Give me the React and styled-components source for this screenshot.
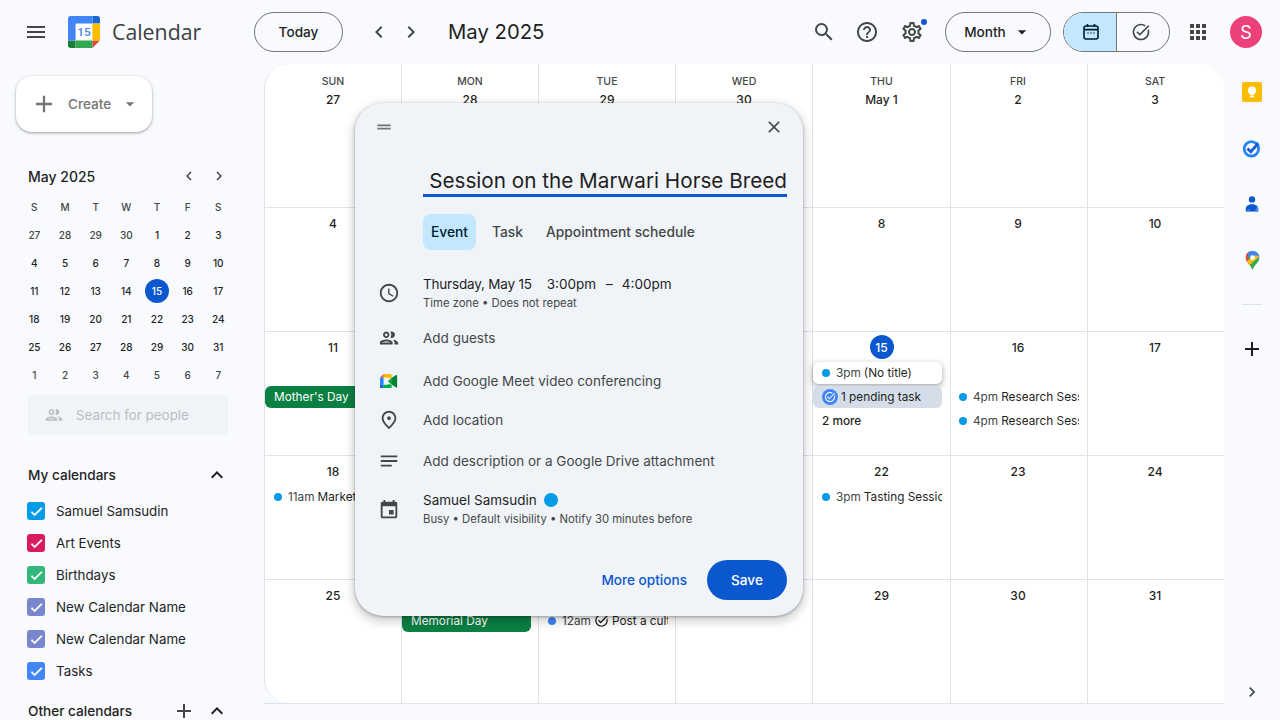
import React from "react";
import styled, { createGlobalStyle } from "styled-components";
import {
  MdMenu,
  MdSearch,
  MdHelpOutline,
  MdOutlineSettings,
  MdArrowDropDown,
  MdOutlineTaskAlt,
  MdApps,
  MdChevronLeft,
  MdChevronRight,
  MdAdd,
  MdClose,
  MdDragHandle,
  MdAccessTime,
  MdOutlineGroup,
  MdOutlinePlace,
  MdNotes,
  MdEvent,
  MdExpandLess,
  MdCheck,
} from "react-icons/md";

const GlobalStyle = createGlobalStyle`
  html, body { margin: 0; padding: 0; height: 100%; overflow: hidden; }
  body {
    background: #f8fafd;
    color: #1f1f1f;
    font-family: "Inter", "Roboto", "Liberation Sans", sans-serif;
  }
  * { box-sizing: border-box; }
`;

const Page = styled.div`
  width: 1280px;
  height: 720px;
  position: relative;
  overflow: hidden;
  background: #f8fafd;
`;

/* top bar */
const Header = styled.header`
  height: 64px;
  display: flex;
  align-items: center;
  padding-right: 18px;
`;
const Brand = styled.div`
  width: 254px;
  display: flex;
  align-items: center;
  padding-left: 24px;
  flex: none;
`;
const BrandName = styled.span`
  font-size: 21.3px;
  color: #3c4043;
  margin: 0 0 2px 12px;
  font-family: "Open Sans", "Inter", sans-serif;
`;
const OutlineButton = styled.div`
  height: 40px;
  width: ${(p) => p.$w}px;
  border: 1px solid #747775;
  border-radius: 20px;
  display: flex;
  align-items: center;
  justify-content: center;
  font-size: 13.6px;
  font-weight: 500;
  color: #1f1f1f;
  flex: none;
`;
const IconSlot = styled.span`
  width: ${(p) => p.$size || 24}px;
  height: ${(p) => p.$size || 24}px;
  margin-left: ${(p) => p.$ml || 0}px;
  color: ${(p) => p.$color || "#444746"};
  position: relative;
  display: flex;
  align-items: center;
  justify-content: center;
  flex: none;
  font-size: ${(p) => p.$size || 24}px;
`;
const PeriodTitle = styled.div`
  font-size: 20.3px;
  margin: 0 0 1px 25px;
  color: #1f1f1f;
`;
const HeaderRight = styled.div`
  margin-left: auto;
  display: flex;
  align-items: center;
`;
const Badge = styled.span`
  position: absolute;
  top: -1px;
  right: -3px;
  width: 6px;
  height: 6px;
  border-radius: 50%;
  background: #0b57d0;
`;
const ViewToggle = styled.div`
  width: 107px;
  height: 40px;
  margin-left: 12px;
  border: 1px solid #747775;
  border-radius: 20px;
  display: flex;
  overflow: hidden;
  flex: none;
`;
const ToggleHalf = styled.div`
  flex: 1;
  display: flex;
  align-items: center;
  justify-content: center;
  background: ${(p) => (p.$on ? "#c2e7ff" : "transparent")};
  color: ${(p) => (p.$on ? "#001d35" : "#444746")};
  border-right: ${(p) => (p.$on ? "1px solid #747775" : "none")};
  padding: ${(p) => (p.$on ? "0 0 0 3px" : "0 4px 0 0")};
  font-size: 20px;
`;
const Avatar = styled.div`
  width: 32px;
  height: 32px;
  margin-left: 20px;
  border-radius: 50%;
  background: #ec407a;
  color: #fff;
  font-size: 18px;
  display: flex;
  align-items: center;
  justify-content: center;
`;

/* page body */
const Body = styled.div`
  height: 656px;
  display: flex;
`;

/* left column */
const Sidebar = styled.aside`
  width: 264px;
  flex: none;
  overflow: hidden;
`;
const CreateButton = styled.div`
  width: 136px;
  height: 56px;
  margin: 12px 0 0 16px;
  background: #fff;
  border-radius: 16px;
  box-shadow: 0 1px 2px rgba(60, 64, 67, 0.3), 0 1px 3px 1px rgba(60, 64, 67, 0.15);
  display: flex;
  align-items: center;
  padding-left: 14px;
  color: #757575;
  font-size: 13.6px;
  font-weight: 500;
`;
const CreateLabel = styled.span`
  margin-left: 10px;
`;
const MiniHead = styled.div`
  height: 24px;
  margin-top: 33px;
  padding: 0 0 2px 28px;
  display: flex;
  align-items: center;
  font-size: 14px;
  font-weight: 500;
`;
const MiniNav = styled.div`
  margin-left: auto;
  display: flex;
  gap: 12px;
  margin-right: 36px;
`;
const MiniGrid = styled.div`
  margin-left: 19px;
  display: grid;
  grid-template-columns: repeat(7, 30.67px);
  grid-auto-rows: 28px;
  margin-top: 4px;
`;
const MiniCell = styled.div`
  display: flex;
  align-items: center;
  justify-content: center;
  font-size: 10px;
  font-weight: 500;
  color: ${(p) => (p.$head || p.$muted ? "#444746" : "#1f1f1f")};
`;
const MiniToday = styled.span`
  width: 24px;
  height: 24px;
  border-radius: 50%;
  background: #0b57d0;
  color: #fff;
  display: flex;
  align-items: center;
  justify-content: center;
`;
const PeopleSearch = styled.div`
  width: 200px;
  height: 40px;
  margin: 6px 0 0 28px;
  background: #f0f4f9;
  border-radius: 4px;
  display: flex;
  align-items: center;
  padding-left: 16px;
  color: #b9bdc1;
  font-size: 13.4px;
  gap: 12px;
`;
const SectionHead = styled.div`
  height: 24px;
  margin-top: ${(p) => p.$mt}px;
  padding: 0 35px 0 28px;
  display: flex;
  align-items: center;
  font-size: 13.6px;
  font-weight: 500;
  white-space: nowrap;
`;
const SectionIcons = styled.span`
  margin-left: auto;
  display: flex;
  align-items: center;
  gap: 9px;
  color: #1f1f1f;
  font-size: 20px;
`;
const CalendarList = styled.div`
  margin-top: 8px;
`;
const CalendarRow = styled.div`
  height: 32px;
  display: flex;
  align-items: center;
  padding-left: 27px;
  font-size: 13.35px;
`;
const CheckBox = styled.span`
  width: 18px;
  height: 18px;
  border-radius: 3px;
  background: ${(p) => p.$color};
  color: #fff;
  margin-right: 11px;
  font-size: 15px;
  display: flex;
  align-items: center;
  justify-content: center;
  & svg path:last-child { stroke: #fff; stroke-width: 1; }
`;

/* month grid */
const MonthFrame = styled.div`
  width: 960px;
  height: 640px;
  flex: none;
  border-bottom: 1px solid #dde3ea;
`;
const Month = styled.main`
  width: 960px;
  height: 639px;
  background: #fff;
  border-left: 1px solid #dde3ea;
  border-radius: 24px 24px 0 24px;
  display: grid;
  grid-template-columns: 137px 137px 137px 137px 138px 137px 136px;
  grid-template-rows: 144px repeat(3, 124px) 123px;
  overflow: hidden;
`;
const DayCell = styled.div`
  border-right: ${(p) => (p.$last ? "none" : "1px solid #dde3ea")};
  border-bottom: ${(p) => (p.$bottom ? "none" : "1px solid #dde3ea")};
  display: flex;
  flex-direction: column;
  min-width: 0;
  padding-top: ${(p) => (p.$first ? 11 : 3)}px;
  & > * { transform: translateX(${(p) => (p.$nudge ? -1 : 0)}px); }
`;
const DayName = styled.div`
  height: 14px;
  line-height: 14px;
  text-align: center;
  font-size: 10.5px;
  font-weight: 500;
  color: #444746;
`;
const DateSlot = styled.div`
  height: ${(p) => (p.$first ? 21 : 24)}px;
  margin-bottom: 3px;
  display: flex;
  align-items: center;
  justify-content: center;
  font-size: 12px;
  font-weight: 500;
`;
const TodayMark = styled.span`
  width: 24px;
  height: 24px;
  border-radius: 50%;
  background: #0b57d0;
  color: #fff;
  display: flex;
  align-items: center;
  justify-content: center;
`;
const EventStack = styled.div`
  display: flex;
  flex-direction: column;
  gap: 2px;
`;
const EventChip = styled.div`
  width: 129px;
  height: 22px;
  flex: none;
  display: flex;
  align-items: center;
  white-space: nowrap;
  overflow: hidden;
  padding: 0 3px 1px 9px;
  font-size: 11.8px;
  border-radius: ${(p) => (p.$wideLeft ? "6px 0 0 6px" : "6px")};
  background: ${(p) => p.$bg || "transparent"};
  color: ${(p) => p.$fg || "#1f1f1f"};
  font-weight: ${(p) => p.$weight || 400};
  box-shadow: ${(p) =>
    p.$raised ? "0 2px 4px rgba(60,64,67,.3), 0 2px 6px 2px rgba(60,64,67,.15)" : "none"};
`;
const EventDot = styled.span`
  width: 8px;
  height: 8px;
  border-radius: 50%;
  background: ${(p) => p.$color || "#039be5"};
  margin: 1px 6px 0 0;
  flex: none;
`;
const EventTime = styled.span`
  color: #444746;
  margin-right: 3px;
`;
const EventTitle = styled.span`
  font-weight: 400;
`;

/* right rail */
const Rail = styled.aside`
  width: 56px;
  flex: none;
  display: flex;
  flex-direction: column;
  align-items: center;
  padding: 16px 0;
`;
const RailSlot = styled.div`
  width: 24px;
  height: 24px;
  margin-bottom: 32px;
  display: flex;
  align-items: center;
  justify-content: center;
`;
const RailRule = styled.div`
  width: 20px;
  height: 1px;
  background: #dde3ea;
  margin-bottom: 32px;
`;
const RailBottom = styled.div`
  margin-top: auto;
  color: #444746;
  font-size: 20px;
  height: 24px;
  display: flex;
  align-items: center;
`;

/* quick create dialog */
const Dialog = styled.section`
  position: absolute;
  left: 355px;
  top: 103px;
  width: 448px;
  height: 513px;
  background: #f0f4f9;
  border-radius: 28px;
  box-shadow: 0 4px 8px 3px rgba(0, 0, 0, 0.15), 0 1px 3px rgba(0, 0, 0, 0.3);
  padding: 0 16px 16px 0;
`;
const DialogTop = styled.div`
  height: 48px;
  display: flex;
  align-items: center;
  justify-content: space-between;
  padding: 0 3px 0 19px;
  color: #444746;
`;
const TitleField = styled.div`
  margin: 14px 0 0 68px;
  height: 32px;
  border-bottom: 3px solid #0b57d0;
  display: flex;
  justify-content: flex-end;
  overflow: hidden;
  white-space: nowrap;
  font-size: 20.7px;
  line-height: 31px;
`;
const Tabs = styled.div`
  margin: 17px 0 0 68px;
  display: flex;
  align-items: center;
  gap: 16px;
  font-size: 13.8px;
  font-weight: 500;
  color: #444746;
`;
const ActiveTab = styled.div`
  height: 36px;
  width: 53px;
  border-radius: 8px;
  background: #c2e7ff;
  color: #001d35;
  display: flex;
  align-items: center;
  justify-content: center;
  padding-bottom: 1px;
`;
const PlainTab = styled.span`
  margin-right: ${(p) => p.$mr || 0}px;
  padding-bottom: 1px;
`;
const DialogRows = styled.div`
  margin-top: 24px;
`;
const DialogRow = styled.div`
  height: ${(p) => p.$h}px;
  display: flex;
  align-items: center;
  font-size: 13.5px;
  color: #444746;
`;
const RowIcon = styled.span`
  width: 68px;
  padding-left: 23px;
  flex: none;
  font-size: 22px;
  display: flex;
  align-items: center;
  color: #444746;
`;
const RowText = styled.div`
  margin-bottom: ${(p) => p.$mb || 0}px;
`;
const MainLine = styled.div`
  color: #1f1f1f;
  line-height: 20px;
  display: flex;
  align-items: center;
  white-space: pre;
`;
const DatePart = styled.span`
  letter-spacing: -0.2px;
`;
const TimePart = styled.span`
  margin-left: ${(p) => p.$ml}px;
`;
const SubLine = styled.div`
  font-size: 11.3px;
  line-height: 18px;
  color: #444746;
`;
const ColorDot = styled.span`
  width: 14px;
  height: 14px;
  border-radius: 50%;
  background: #039be5;
  margin-left: 7px;
`;
const DialogFoot = styled.div`
  margin-top: 20px;
  display: flex;
  align-items: center;
  justify-content: flex-end;
  gap: 20px;
  font-size: 13.6px;
  font-weight: 500;
`;
const TextLink = styled.span`
  color: #0b57d0;
`;
const SaveButton = styled.div`
  width: 80px;
  height: 40px;
  border-radius: 20px;
  background: #0b57d0;
  color: #fff;
  display: flex;
  align-items: center;
  justify-content: center;
`;

const CalendarLogo = () => (
  <svg width="32" height="32" viewBox="0 0 200 200">
    <path fill="#fff" d="M152 48H48v104h104z" />
    <path fill="#EA4335" d="M152.632 200L200 152.632h-47.368z" />
    <path fill="#188038" d="M0 152.632v31.579C0 192.935 7.065 200 15.789 200h31.579v-47.368z" />
    <path fill="#1967D2" d="M200 47.368V15.789C200 7.065 192.935 0 184.211 0h-31.579v47.368z" />
    <path fill="#FBBC04" d="M200 47.368h-47.368v105.263H200z" />
    <path fill="#34A853" d="M152.632 152.632H47.368V200h105.263z" />
    <path fill="#4285F4" d="M47.368 47.368h105.263V0H15.789C7.065 0 0 7.065 0 15.789v136.842h47.368z" />
    <text x="100" y="125" textAnchor="middle" fontSize="74" fontWeight="500" fill="#4285F4" fontFamily="Roboto, sans-serif">15</text>
  </svg>
);

const MonthIcon = () => (
  <svg width="20" height="20" viewBox="0 0 20 20" fill="none" stroke="currentColor" strokeWidth="1.6">
    <rect x="3" y="4" width="14" height="13" rx="2" />
    <path d="M3 7.6h14M6.500 2v3M13.500 2v3" />
    <path d="M6.500 11h1M9.500 11h1M12.500 11h1" strokeWidth="1.4" />
  </svg>
);

const KeepIcon = () => (
  <svg width="20" height="20" viewBox="0 0 20 20">
    <rect width="20" height="20" rx="2" fill="#fbbc04" />
    <circle cx="10" cy="8.600" r="4" fill="#fff" />
    <rect x="8" y="11" width="4" height="2.400" fill="#fff" />
    <rect x="8" y="14" width="4" height="1.400" fill="#fff" />
  </svg>
);

const TasksIcon = () => (
  <svg width="20" height="20" viewBox="0 0 20 20" fill="none">
    <circle cx="9.400" cy="10.800" r="7.200" stroke="#2684fc" strokeWidth="2.800" />
    <path d="M5.400 10.400l3.400 3.400 7.800-8.800" stroke="#1a5fd0" strokeWidth="2.800" />
    <path d="M15 1.600l4 1.600-2 3.400z" fill="#f8fafd" />
  </svg>
);

const ContactsIcon = () => (
  <svg width="20" height="20" viewBox="0 0 20 20">
    <circle cx="10" cy="5.400" r="3.200" fill="#0b57d0" />
    <path d="M3.800 17.600v-2.800c0-3 2.800-4.600 6.200-4.600 3.400 0 6.200 1.600 6.200 4.600v2.800z" fill="#0b57d0" />
    <path d="M13 17.600h3.200v-2.800c0-1.400-.6-2.400-1.400-3.200z" fill="#4285f4" />
    <path d="M3.800 17.600h3.600v-3z" fill="#4285f4" />
  </svg>
);

const MapsIcon = () => (
  <svg width="15" height="19" viewBox="2 1 16 22">
    <defs>
      <clipPath id="pin">
        <path d="M10 1C5 1 2 4.800 2 8.800c0 5 5.600 7.800 8 14.200 2.400-6.400 8-9.200 8-14.200C18 4.800 15 1 10 1z" />
      </clipPath>
    </defs>
    <g clipPath="url(#pin)">
      <rect width="20" height="24" fill="#34a853" />
      <path d="M0 0h10l-6 8 3 4-7 2z" fill="#ea4335" />
      <path d="M10 0h10v10h-7l-3-5-3 1z" fill="#4285f4" />
      <path d="M0 15l13-9 5 1 -12 11z" fill="#fbbc04" />
      <path d="M4 4l6-4 3 6-6 4z" fill="#4285f4" />
    </g>
    <circle cx="10" cy="8.800" r="2.800" fill="#fff" />
  </svg>
);

const MeetSvg = styled.svg`
  margin-left: 2px;
`;
const MeetIcon = () => (
  <MeetSvg width="18" height="14.400" viewBox="0 0 20 16">
    <path fill="#ea4335" d="M4 0L0 4h4z" />
    <path fill="#2684fc" d="M0 4h4v8H0z" />
    <path fill="#0066da" d="M0 12h4v4H1.500A1.500 1.500 0 0 1 0 14.500z" />
    <path fill="#ffba00" d="M4 0h7.500A1.500 1.500 0 0 1 13 1.500V4l-4 1V4H4z" />
    <path fill="#00ac47" d="M4 12h5v-1l4 1v2.500a1.500 1.500 0 0 1-1.500 1.500H4z" />
    <path fill="#00832d" d="M9 8l4-3.600 5-3.400c.6-.4 1 0 1 .6v12.800c0 .6-.4 1-1 .6l-5-3.400z" />
    <path fill="#00ac47" d="M9 8l4 4V4z" />
  </MeetSvg>
);

const PendingIcon = styled.span`
  width: 16px;
  height: 16px;
  border-radius: 50%;
  background: #4285f4;
  color: #fff;
  margin: 1px 3px 0 0;
  display: flex;
  align-items: center;
  justify-content: center;
  font-size: 12px;
  flex: none;
`;

const InlineCheck = styled.span`
  display: flex;
  font-size: 15px;
  margin-right: 3px;
  color: #1f1f1f;
`;

const MINI_HEAD = ["S", "M", "T", "W", "T", "F", "S"];
const MINI_DAYS = [
  27, 28, 29, 30, 1, 2, 3, 4, 5, 6, 7, 8, 9, 10, 11, 12, 13, 14, 15, 16, 17, 18, 19, 20, 21, 22, 23,
  24, 25, 26, 27, 28, 29, 30, 31, 1, 2, 3, 4, 5, 6, 7,
];
const CALENDARS = [
  ["Samuel Samsudin", "#039be5"],
  ["Art Events", "#d81b60"],
  ["Birthdays", "#33b679"],
  ["New Calendar Name", "#7986cb"],
  ["New Calendar Name", "#7986cb"],
  ["Tasks", "#4285f4"],
];
const DAY_NAMES = ["SUN", "MON", "TUE", "WED", "THU", "FRI", "SAT"];

const timed = (time, title, color) => (
  <EventChip>
    <EventDot $color={color} />
    <EventTime>{time}</EventTime>
    <EventTitle>{title}</EventTitle>
  </EventChip>
);
const spacer = <EventChip />;

const MONTH = [
  { label: "27" }, { label: "28" }, { label: "29" }, { label: "30" }, { label: "May 1" }, { label: "2" }, { label: "3" },
  { label: "4" }, { label: "5" }, { label: "6" }, { label: "7" }, { label: "8" }, { label: "9" }, { label: "10" },
  {
    label: "11",
    events: [spacer, <EventChip $bg="#0b8043" $fg="#fff" $wideLeft key="m">Mother's Day</EventChip>],
  },
  { label: "12" }, { label: "13" }, { label: "14" },
  {
    label: "15",
    today: true,
    events: [
      <EventChip $bg="#fff" $raised key="a">
        <EventDot />
        <EventTime>3pm</EventTime>
        <EventTitle>(No title)</EventTitle>
      </EventChip>,
      <EventChip $bg="#d5dee8" key="b">
        <PendingIcon><MdOutlineTaskAlt /></PendingIcon>
        1 pending task
      </EventChip>,
      <EventChip $weight={450} key="c">2 more</EventChip>,
    ],
  },
  {
    label: "16",
    events: [spacer, timed("4pm", "Research Session"), timed("4pm", "Research Session")],
  },
  { label: "17" },
  { label: "18", events: [timed("11am", "Market Visit")] },
  { label: "19" }, { label: "20" }, { label: "21" },
  { label: "22", events: [timed("3pm", "Tasting Session")] },
  { label: "23" }, { label: "24" },
  { label: "25" },
  {
    label: "26",
    events: [<EventChip $bg="#0b8043" $fg="#fff" key="d">Memorial Day</EventChip>],
  },
  {
    label: "27",
    events: [
      <EventChip key="e">
        <EventDot $color="#4285f4" />
        <EventTime>12am</EventTime>
        <InlineCheck><MdOutlineTaskAlt /></InlineCheck>
        <EventTitle>Post a cultural update</EventTitle>
      </EventChip>,
    ],
  },
  { label: "28" }, { label: "29" }, { label: "30" }, { label: "31" },
];

const App = () => {
  return (
    <Page>
      <GlobalStyle />
      <Header>
        <Brand>
          <IconSlot><MdMenu /></IconSlot>
          <IconSlot $size={32} $ml={20}><CalendarLogo /></IconSlot>
          <BrandName>Calendar</BrandName>
        </Brand>
        <OutlineButton $w={89}>Today</OutlineButton>
        <IconSlot $ml={24}><MdChevronLeft /></IconSlot>
        <IconSlot $ml={8}><MdChevronRight /></IconSlot>
        <PeriodTitle>May 2025</PeriodTitle>
        <HeaderRight>
          <IconSlot><MdSearch /></IconSlot>
          <IconSlot $ml={19}><MdHelpOutline /></IconSlot>
          <IconSlot $ml={21}><MdOutlineSettings /><Badge /></IconSlot>
          <IconSlot $size={21} />
          <OutlineButton $w={106}>
            Month
            <IconSlot $size={20} $ml={6} $color="#1f1f1f"><MdArrowDropDown /></IconSlot>
          </OutlineButton>
          <ViewToggle>
            <ToggleHalf $on><MonthIcon /></ToggleHalf>
            <ToggleHalf><MdOutlineTaskAlt /></ToggleHalf>
          </ViewToggle>
          <IconSlot $ml={16}><MdApps /></IconSlot>
          <Avatar>S</Avatar>
        </HeaderRight>
      </Header>

      <Body>
        <Sidebar>
          <CreateButton>
            <IconSlot $size={28} $color="#757575"><MdAdd /></IconSlot>
            <CreateLabel>Create</CreateLabel>
            <IconSlot $size={20} $ml={9} $color="#757575"><MdArrowDropDown /></IconSlot>
          </CreateButton>
          <MiniHead>
            May 2025
            <MiniNav>
              <IconSlot $size={18} $color="#444746"><MdChevronLeft /></IconSlot>
              <IconSlot $size={18} $color="#444746"><MdChevronRight /></IconSlot>
            </MiniNav>
          </MiniHead>
          <MiniGrid>
            {MINI_HEAD.map((d, i) => (
              <MiniCell $head key={i}>{d}</MiniCell>
            ))}
            {MINI_DAYS.map((d, i) => (
              <MiniCell key={i} $muted={i < 4 || i > 34}>
                {i === 18 ? <MiniToday>{d}</MiniToday> : d}
              </MiniCell>
            ))}
          </MiniGrid>
          <PeopleSearch>
            <IconSlot $size={20} $color="#b9bdc1"><MdOutlineGroup /></IconSlot>
            Search for people
          </PeopleSearch>
          <SectionHead $mt={28}>
            My calendars
            <SectionIcons><IconSlot $color="#1f1f1f"><MdExpandLess /></IconSlot></SectionIcons>
          </SectionHead>
          <CalendarList>
            {CALENDARS.map(([name, color], i) => (
              <CalendarRow key={i}>
                <CheckBox $color={color}><MdCheck /></CheckBox>
                {name}
              </CalendarRow>
            ))}
          </CalendarList>
          <SectionHead $mt={12}>
            Other calendars
            <SectionIcons>
              <IconSlot $color="#444746"><MdAdd /></IconSlot>
              <IconSlot $color="#1f1f1f"><MdExpandLess /></IconSlot>
            </SectionIcons>
          </SectionHead>
        </Sidebar>

        <MonthFrame>
          <Month>
            {MONTH.map((day, i) => (
              <DayCell key={i} $first={i < 7} $last={i % 7 === 6} $bottom={i >= 28} $nudge={i % 7 >= 5}>
                {i < 7 && <DayName>{DAY_NAMES[i]}</DayName>}
                <DateSlot $first={i < 7}>
                  {day.today ? <TodayMark>{day.label}</TodayMark> : day.label}
                </DateSlot>
                {day.events && (
                  <EventStack>
                    {day.events.map((ev, n) => (
                      <React.Fragment key={n}>{ev}</React.Fragment>
                    ))}
                  </EventStack>
                )}
              </DayCell>
            ))}
          </Month>
        </MonthFrame>

        <Rail>
          <RailSlot><KeepIcon /></RailSlot>
          <RailSlot><TasksIcon /></RailSlot>
          <RailSlot><ContactsIcon /></RailSlot>
          <RailSlot><MapsIcon /></RailSlot>
          <RailRule />
          <RailSlot><IconSlot $color="#1f1f1f"><MdAdd /></IconSlot></RailSlot>
          <RailBottom><MdChevronRight /></RailBottom>
        </Rail>
      </Body>

      <Dialog>
        <DialogTop>
          <IconSlot $size={20} $color="#747775"><MdDragHandle /></IconSlot>
          <IconSlot $size={20}><MdClose /></IconSlot>
        </DialogTop>
        <TitleField>Information Session on the Marwari Horse Breed</TitleField>
        <Tabs>
          <ActiveTab>Event</ActiveTab>
          <PlainTab $mr={7}>Task</PlainTab>
          <PlainTab>Appointment schedule</PlainTab>
        </Tabs>
        <DialogRows>
          <DialogRow $h={38}>
            <RowIcon><MdAccessTime /></RowIcon>
            <RowText>
              <MainLine>
                <DatePart>Thursday, May 15</DatePart>
                <TimePart $ml={15}>3:00pm</TimePart>
                <TimePart $ml={10}>–</TimePart>
                <TimePart $ml={9}>4:00pm</TimePart>
              </MainLine>
              <SubLine>Time zone • Does not repeat</SubLine>
            </RowText>
          </DialogRow>
          <DialogRow $h={52}>
            <RowIcon><MdOutlineGroup /></RowIcon>
            Add guests
          </DialogRow>
          <DialogRow $h={34}>
            <RowIcon><MeetIcon /></RowIcon>
            Add Google Meet video conferencing
          </DialogRow>
          <DialogRow $h={44}>
            <RowIcon><MdOutlinePlace /></RowIcon>
            Add location
          </DialogRow>
          <DialogRow $h={38}>
            <RowIcon><MdNotes /></RowIcon>
            Add description or a Google Drive attachment
          </DialogRow>
          <DialogRow $h={60}>
            <RowIcon><MdEvent /></RowIcon>
            <RowText $mb={2}>
              <MainLine>Samuel Samsudin<ColorDot /></MainLine>
              <SubLine>Busy • Default visibility • Notify 30 minutes before</SubLine>
            </RowText>
          </DialogRow>
        </DialogRows>
        <DialogFoot>
          <TextLink>More options</TextLink>
          <SaveButton>Save</SaveButton>
        </DialogFoot>
      </Dialog>
    </Page>
  );
};

export default App;
